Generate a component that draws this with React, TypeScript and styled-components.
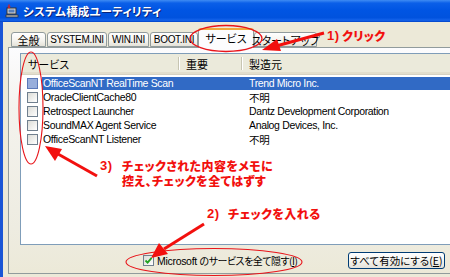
import React from 'react';
import styled, { createGlobalStyle } from 'styled-components';

const Global = createGlobalStyle`
  html, body { margin: 0; padding: 0; background: #ECE9D8; }
  body { width: 450px; height: 277px; overflow: hidden; }
  #root { width: 450px; height: 277px; }
`;

const UI = `"Liberation Sans", "Noto Sans CJK JP", sans-serif`;
const JP = `"Noto Sans CJK JP", sans-serif`;

const Window = styled.div`
  position: relative;
  width: 450px;
  height: 277px;
  overflow: hidden;
  display: flex;
  flex-direction: column;
  font-family: ${UI};
  color: #000;
`;

const TitleBar = styled.div`
  height: 22px;
  flex: none;
  display: flex;
  align-items: center;
  gap: 4px;
  padding-left: 5px;
  background: linear-gradient(#3F8CF3 0%, #0B5FE8 14%, #0055E3 45%, #0052DE 80%, #1463EA 92%, #0042C6 100%);
`;

const TitleText = styled.span`
  color: #fff;
  font-family: ${JP};
  font-size: 11.5px;
  font-weight: bold;
  font-feature-settings: "palt";
  letter-spacing: 0.2px;
  text-shadow: 1px 1px 0 #0A2276;
`;

const Frame = styled.div`
  flex: 1;
  display: flex;
  flex-direction: column;
  border-left: 3px solid #1a55d6;
  padding: 6px 0 4px 5px;
  background: #ECE9D8;
`;

const TabStrip = styled.div`
  display: flex;
  align-items: flex-end;
  height: 19px;
  padding-left: 3px;
  gap: 1px;
  position: relative;
  z-index: 1;
`;

const Tab = styled.div<{ $w: number; $active?: boolean; $jp?: boolean }>`
  box-sizing: border-box;
  width: ${p => p.$w}px;
  height: ${p => (p.$active ? 20 : 15)}px;
  margin: ${p => (p.$active ? '0 -1px -1px -1px' : '0')};
  display: flex;
  align-items: center;
  justify-content: center;
  border: 1px solid #919B9C;
  border-bottom: ${p => (p.$active ? 'none' : '1px solid #919B9C')};
  border-top: ${p => (p.$active ? '2px solid #F0A83C' : '1px solid #919B9C')};
  border-radius: 3px 3px 0 0;
  background: ${p => (p.$active ? '#FCFCFE' : 'linear-gradient(#FFFFFF, #F4F3EE 60%, #E4E2D8)')};
  font-family: ${p => (p.$jp ? JP : UI)};
  font-size: ${p => (p.$jp ? 11 : 10)}px;
  letter-spacing: ${p => (p.$jp ? 0 : -0.3)}px;
  font-feature-settings: "palt";
  white-space: nowrap;
  padding-bottom: ${p => (p.$active ? 2 : 0)}px;
`;

const Panel = styled.div`
  flex: 1;
  display: flex;
  flex-direction: column;
  margin-right: -10px;
  border: 1px solid #919B9C;
  padding: 5px 0 0 11px;
  background: linear-gradient(#FCFCFE 0px, #F4F3EE 60px, #EEECE1 180px, #ECE9D8 100%);
`;

const List = styled.div`
  height: 192px;
  box-sizing: border-box;
  border: 1px solid #7F9DB9;
  background: #fff;
  display: flex;
  flex-direction: column;
`;

const Header = styled.div`
  height: 21px;
  flex: none;
  display: flex;
  background: #EBEADB;
  border-bottom: 1px solid #D6D2C2;
  box-shadow: inset 0 -2px 0 #E2DECD;
  box-sizing: border-box;
`;

const HeadCell = styled.div<{ $w?: number }>`
  position: relative;
  ${p => (p.$w ? `width: ${p.$w}px;` : 'flex: 1;')}
  flex-shrink: 0;
  display: flex;
  align-items: center;
  padding-left: 7px;
  box-sizing: border-box;
  font-family: ${JP};
  font-size: 11px;
  font-feature-settings: "palt";
  &::after {
    content: '';
    position: absolute;
    right: 0;
    top: 3px;
    bottom: 4px;
    width: 1px;
    background: #C7C5B2;
    box-shadow: 1px 0 0 #fff;
    display: ${p => (p.$w ? 'block' : 'none')};
  }
`;

const Rows = styled.div`
  padding-top: 1px;
  display: flex;
  flex-direction: column;
`;

const Row = styled.div`
  height: 14px;
  display: flex;
  align-items: center;
`;

const CheckCell = styled.div`
  width: 21px;
  flex: none;
  display: flex;
  align-items: center;
  padding-left: 6px;
  box-sizing: border-box;
`;

const Check = styled.span<{ $hot?: boolean }>`
  width: 11px;
  height: 11px;
  box-sizing: border-box;
  flex: none;
  display: inline-flex;
  align-items: center;
  justify-content: center;
  border: 1px solid ${p => (p.$hot ? '#5B79B9' : '#707F8E')};
  background: ${p => (p.$hot ? '#97AEDC' : 'linear-gradient(135deg, #DCDCD7, #FFFFFF)')};
`;

const Sel = styled.div<{ $on?: boolean }>`
  flex: 1;
  height: 13px;
  display: flex;
  align-items: center;
  background: ${p => (p.$on ? '#316AC5' : 'transparent')};
  color: ${p => (p.$on ? '#fff' : '#000')};
  font-size: 10.5px;
  letter-spacing: -0.35px;
  white-space: nowrap;
`;

const Cell = styled.div<{ $w?: number; $pad: number }>`
  ${p => (p.$w ? `width: ${p.$w}px;` : 'flex: 1;')}
  flex-shrink: 0;
  padding-left: ${p => p.$pad}px;
  box-sizing: border-box;
  font-feature-settings: "palt";
`;

const BottomRow = styled.div`
  height: 28px;
  display: flex;
  align-items: center;
  padding-top: 2px;
  box-sizing: border-box;
`;

const CheckLabel = styled.label`
  margin-left: 123px;
  display: flex;
  align-items: center;
  gap: 3px;
  font-size: 10.5px;
  letter-spacing: -0.3px;
  white-space: nowrap;
`;

const JpText = styled.span`
  font-family: ${JP};
  font-size: 10px;
  letter-spacing: -0.5px;
  font-feature-settings: "palt";
`;

const Button = styled.button`
  margin-left: auto;
  margin-right: 14px;
  width: 97px;
  height: 17px;
  padding: 0;
  border: 1px solid #003C74;
  border-radius: 3px;
  background: linear-gradient(#FFFFFF, #F4F4F0 50%, #E3E2DA);
  font-family: ${JP};
  font-size: 10.5px;
  font-feature-settings: "palt";
  color: #000;
  white-space: nowrap;
  display: flex;
  align-items: center;
  justify-content: center;
`;

const Overlay = styled.svg`
  position: absolute;
  left: 0;
  top: 0;
  pointer-events: none;
  z-index: 5;
`;

const Note = styled.div<{ $x: number; $y: number }>`
  position: absolute;
  left: ${p => p.$x}px;
  top: ${p => p.$y}px;
  z-index: 6;
  display: flex;
  color: #F2100E;
  font-family: ${JP};
  font-weight: 900;
  font-size: 12px;
  line-height: 15px;
  letter-spacing: 0.4px;
  white-space: nowrap;
  font-feature-settings: "palt";
`;

const Num = styled.span<{ $w: number }>`
  width: ${p => p.$w}px;
  flex: none;
  font-family: "Liberation Sans", sans-serif;
  font-weight: bold;
  font-size: 13px;
`;

const Lines = styled.div`
  display: flex;
  flex-direction: column;
`;

const services = [
  { name: 'OfficeScanNT RealTime Scan', maker: 'Trend Micro Inc.', sel: true },
  { name: 'OracleClientCache80', maker: '不明' },
  { name: 'Retrospect Launcher', maker: 'Dantz Development Corporation' },
  { name: 'SoundMAX Agent Service', maker: 'Analog Devices, Inc.' },
  { name: 'OfficeScanNT Listener', maker: '不明' },
];

const AppIcon = () => (
  <svg width="14" height="14" viewBox="0 0 14 14">
    <rect x="2" y="4" width="9" height="6" fill="#D8D8D8" stroke="#333" strokeWidth="1" />
    <rect x="3.5" y="5.5" width="6" height="3" fill="#5A7FB8" />
    <rect x="1" y="11" width="12" height="2" fill="#C8C8C8" stroke="#333" strokeWidth="0.8" />
    <path d="M4 0.5 L4 4" stroke="#D42020" strokeWidth="1.4" />
    <path d="M2.8 2.5 L4 4.2 L5.2 2.5" fill="none" stroke="#D42020" strokeWidth="1" />
  </svg>
);

const Tick = () => (
  <svg width="9" height="9" viewBox="0 0 9 9">
    <path d="M1.5 4.5 L3.6 6.6 L7.6 1.8" fill="none" stroke="#21A121" strokeWidth="1.8" />
  </svg>
);

export default function App() {
  return (
    <>
      <Global />
      <Window>
        <TitleBar>
          <AppIcon />
          <TitleText>システム構成ユーティリティ</TitleText>
        </TitleBar>
        <Frame>
          <TabStrip>
            <Tab $w={35} $jp>全般</Tab>
            <Tab $w={60}>SYSTEM.INI</Tab>
            <Tab $w={41}>WIN.INI</Tab>
            <Tab $w={48}>BOOT.INI</Tab>
            <Tab $w={56} $active $jp>サービス</Tab>
            <Tab $w={63} $jp>スタートアップ</Tab>
          </TabStrip>
          <Panel>
            <List>
              <Header>
                <HeadCell $w={158}>サービス</HeadCell>
                <HeadCell $w={63}>重要</HeadCell>
                <HeadCell>製造元</HeadCell>
              </Header>
              <Rows>
                {services.map((s, i) => (
                  <Row key={i}>
                    <CheckCell>
                      <Check $hot={s.sel} />
                    </CheckCell>
                    <Sel $on={s.sel}>
                      <Cell $w={137} $pad={1}>{s.name}</Cell>
                      <Cell $w={63} $pad={7}></Cell>
                      <Cell $pad={7}>{s.maker}</Cell>
                    </Sel>
                  </Row>
                ))}
              </Rows>
            </List>
            <BottomRow>
              <CheckLabel>
                <Check>
                  <Tick />
                </Check>
                <span>
                  Microsoft <JpText>のサービスを全て隠す(<u>I</u>)</JpText>
                </span>
              </CheckLabel>
              <Button>
                すべて有効にする(<u>E</u>)
              </Button>
            </BottomRow>
          </Panel>
        </Frame>

        <Overlay width="450" height="277" viewBox="0 0 450 277">
          <ellipse cx="226" cy="38.5" rx="36" ry="13" fill="none" stroke="#E8141A" strokeWidth="1.3" />
          <line x1="324" y1="33" x2="278" y2="45.5" stroke="#F2100E" strokeWidth="3" />
          <polygon points="262,50 277,39 281,51" fill="#F2100E" />

          <ellipse cx="31" cy="108" rx="12" ry="56" fill="none" stroke="#E8141A" strokeWidth="1.1" />
          <line x1="97" y1="176" x2="58" y2="154" stroke="#F2100E" strokeWidth="3" />
          <polygon points="45,146 62,149 55,161" fill="#F2100E" />

          <ellipse cx="214" cy="262" rx="88" ry="13.5" fill="none" stroke="#E8141A" strokeWidth="1.1" />
          <line x1="204" y1="224" x2="164" y2="249" stroke="#F2100E" strokeWidth="3" />
          <polygon points="151,258 159,243 168,254" fill="#F2100E" />
        </Overlay>

        <Note $x={327} $y={28}>
          <Num $w={15}>1)</Num>
          <span>クリック</span>
        </Note>
        <Note $x={100} $y={158}>
          <Num $w={22}>3)</Num>
          <Lines>
            <span>チェックされた内容をメモに</span>
            <span>控え、チェックを全てはずす</span>
          </Lines>
        </Note>
        <Note $x={207} $y={206}>
          <Num $w={21}>2)</Num>
          <span>チェックを入れる</span>
        </Note>
      </Window>
    </>
  );
}
